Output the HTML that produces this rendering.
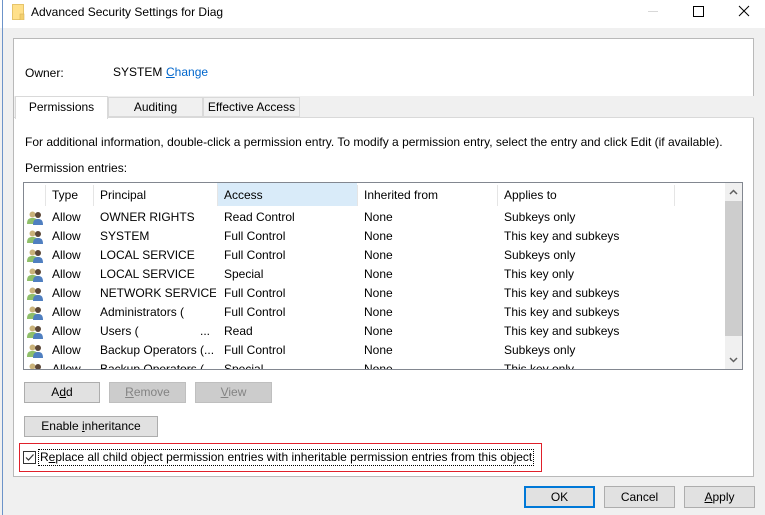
<!DOCTYPE html>
<html><head><style>
body{margin:0;width:765px;height:515px;background:#f0f0f0;position:relative;overflow:hidden;font-family:"Liberation Sans",sans-serif;font-size:12px;color:#000}
.a{position:absolute;white-space:nowrap}
.btn{position:absolute;background:#e1e1e1;border:1px solid #adadad;box-sizing:border-box;text-align:center;line-height:19px}
.dis{background:#cccccc;border-color:#bfbfbf;color:#838383}
.row{position:absolute;left:0;height:19px;line-height:19px}
</style></head><body>
<div class="a" style="left:0;top:0;width:765px;height:28px;background:#fff"></div>
<div class="a" style="left:2px;top:0;width:1px;height:515px;background:#6c93c9"></div>
<svg class="a" style="left:12px;top:4px" width="13" height="16"><rect x="0.5" y="0.5" width="11" height="15" fill="#ffe08a" stroke="#e6c46a"/><rect x="8" y="10" width="4" height="6" fill="#f3cf6d" stroke="#d9b45a" stroke-width="0.6"/></svg>
<div class="a" style="left:31px;top:5px;font-size:12px">Advanced Security Settings for Diag</div>
<div class="a" style="left:648px;top:11px;width:10px;height:1px;background:#d8d8d8"></div>
<div class="a" style="left:693px;top:6px;width:9px;height:9px;border:1px solid #000"></div>
<svg class="a" style="left:738px;top:5px" width="12" height="12"><path d="M1 1L11 11M11 1L1 11" stroke="#000" stroke-width="1"/></svg>

<div class="a" style="left:13px;top:38px;width:741px;height:439px;background:#fff;border:1px solid #b9b9b9;box-sizing:border-box"></div>
<div class="a" style="left:25px;top:66px">Owner:</div>
<div class="a" style="left:113px;top:65px">SYSTEM</div>
<div class="a" style="left:166px;top:65px;color:#0066cc"><u>C</u>hange</div>

<div class="a" style="left:14px;top:96px;width:740px;height:22px;background:#f0f0f0"></div>
<div class="a" style="left:14px;top:117px;width:740px;height:1px;background:#d9d9d9"></div>
<div class="a" style="left:108px;top:97px;width:95px;height:20px;background:#f0f0f0;border:1px solid #d9d9d9;box-sizing:border-box;text-align:center;line-height:19px">Auditing</div>
<div class="a" style="left:203px;top:97px;width:97px;height:20px;background:#f0f0f0;border:1px solid #d9d9d9;box-sizing:border-box;text-align:center;line-height:19px">Effective Access</div>
<div class="a" style="left:15px;top:96px;width:93px;height:23px;background:#fff;border:1px solid #d9d9d9;border-bottom:none;box-sizing:border-box;text-align:center;line-height:21px">Permissions</div>

<div class="a" style="left:25px;top:135px">For additional information, double-click a permission entry. To modify a permission entry, select the entry and click Edit (if available).</div>
<div class="a" style="left:25px;top:161px">Permission entries:</div>

<div class="a" style="left:23px;top:182px;width:720px;height:188px;border:1px solid #828790;box-sizing:border-box;overflow:hidden;background:#fff">
 <div class="a" style="left:193px;top:0;width:140px;height:23px;background:#d9ebf9"></div>
 <div class="a" style="left:21px;top:2px;width:1px;height:21px;background:#e5e5e5"></div>
 <div class="a" style="left:69px;top:2px;width:1px;height:21px;background:#e5e5e5"></div>
 <div class="a" style="left:193px;top:2px;width:1px;height:21px;background:#e5e5e5"></div>
 <div class="a" style="left:333px;top:2px;width:1px;height:21px;background:#e5e5e5"></div>
 <div class="a" style="left:473px;top:2px;width:1px;height:21px;background:#e5e5e5"></div>
 <div class="a" style="left:650px;top:2px;width:1px;height:21px;background:#e5e5e5"></div>
 <div class="a" style="left:28px;top:5px">Type</div>
 <div class="a" style="left:76px;top:5px">Principal</div>
 <div class="a" style="left:200px;top:5px">Access</div>
 <div class="a" style="left:340px;top:5px">Inherited from</div>
 <div class="a" style="left:480px;top:5px">Applies to</div>
 <div class="a" style="left:701px;top:0;width:17px;height:186px;background:#f0f0f0"></div>
 <div class="a" style="left:701px;top:18px;width:17px;height:135px;background:#cdcdcd"></div>
 <svg class="a" style="left:705px;top:6px" width="9" height="6"><path d="M1 5L4.5 1.5L8 5" stroke="#606060" stroke-width="1.5" fill="none"/></svg>
 <svg class="a" style="left:705px;top:174px" width="9" height="6"><path d="M1 1L4.5 4.5L8 1" stroke="#606060" stroke-width="1.5" fill="none"/></svg>
 <div id="rows"></div>
</div>

<div class="btn" style="left:24px;top:382px;width:76px;height:21px">A<u>d</u>d</div>
<div class="btn dis" style="left:109px;top:382px;width:77px;height:21px"><u>R</u>emove</div>
<div class="btn dis" style="left:195px;top:382px;width:77px;height:21px"><u>V</u>iew</div>
<div class="btn" style="left:24px;top:416px;width:134px;height:21px">Enable <u>i</u>nheritance</div>

<div class="a" style="left:19px;top:443px;width:523px;height:29px;border:1px solid #e0202a;box-sizing:border-box"></div>
<div class="a" style="left:23px;top:451px;width:13px;height:13px;border:1px solid #333;box-sizing:border-box;background:#fff"></div>
<svg class="a" style="left:24px;top:452px" width="11" height="11"><path d="M2 5.5L4.5 8L9.5 2.5" stroke="#333" stroke-width="1.2" fill="none"/></svg>
<div class="a" style="left:38px;top:449px;border:1px dotted #000;padding:0 1px;line-height:15px">R<u>e</u>place all child object permission entries with inheritable permission entries from this object</div>

<div class="btn" style="left:524px;top:486px;width:71px;height:22px;border:2px solid #0078d7;line-height:18px">OK</div>
<div class="btn" style="left:604px;top:486px;width:71px;height:22px;line-height:20px">Cancel</div>
<div class="btn" style="left:684px;top:486px;width:71px;height:22px;line-height:20px"><u>A</u>pply</div>

<script>
var d=[["OWNER RIGHTS","Read Control","Subkeys only"],["SYSTEM","Full Control","This key and subkeys"],["LOCAL SERVICE","Full Control","Subkeys only"],["LOCAL SERVICE","Special","This key only"],["NETWORK SERVICE","Full Control","This key and subkeys"],["Administrators (","Full Control","This key and subkeys"],["Users (","Read","This key and subkeys"],["Backup Operators (...","Full Control","Subkeys only"],["Backup Operators (","Special","This key only"]];
var h="";
var ic='<svg class="a" style="left:3px;top:2px" width="17" height="15"><circle cx="5.5" cy="4.5" r="3" fill="#c9b27a"/><path d="M0 14C0 9 2 8 5.5 8S11 9 11 14Z" fill="#8fbf6a"/><circle cx="11" cy="5" r="3" fill="#5b4636"/><path d="M6 15C6 10 8 9 11 9S16 10 16 15Z" fill="#4f7fc0"/></svg>';
d.forEach(function(r,i){var t=25+i*19;h+='<div class="row" style="top:'+t+'px;width:700px">'+ic+'<div class="a" style="left:28px">Allow</div><div class="a" style="left:76px;width:116px;overflow:hidden">'+r[0]+'</div>'+(i==6?'<div class="a" style="left:176px">...</div>':'')+'<div class="a" style="left:200px">'+r[1]+'</div><div class="a" style="left:340px">None</div><div class="a" style="left:480px">'+r[2]+'</div></div>';});
document.getElementById("rows").innerHTML=h;
</script>
</body></html>
